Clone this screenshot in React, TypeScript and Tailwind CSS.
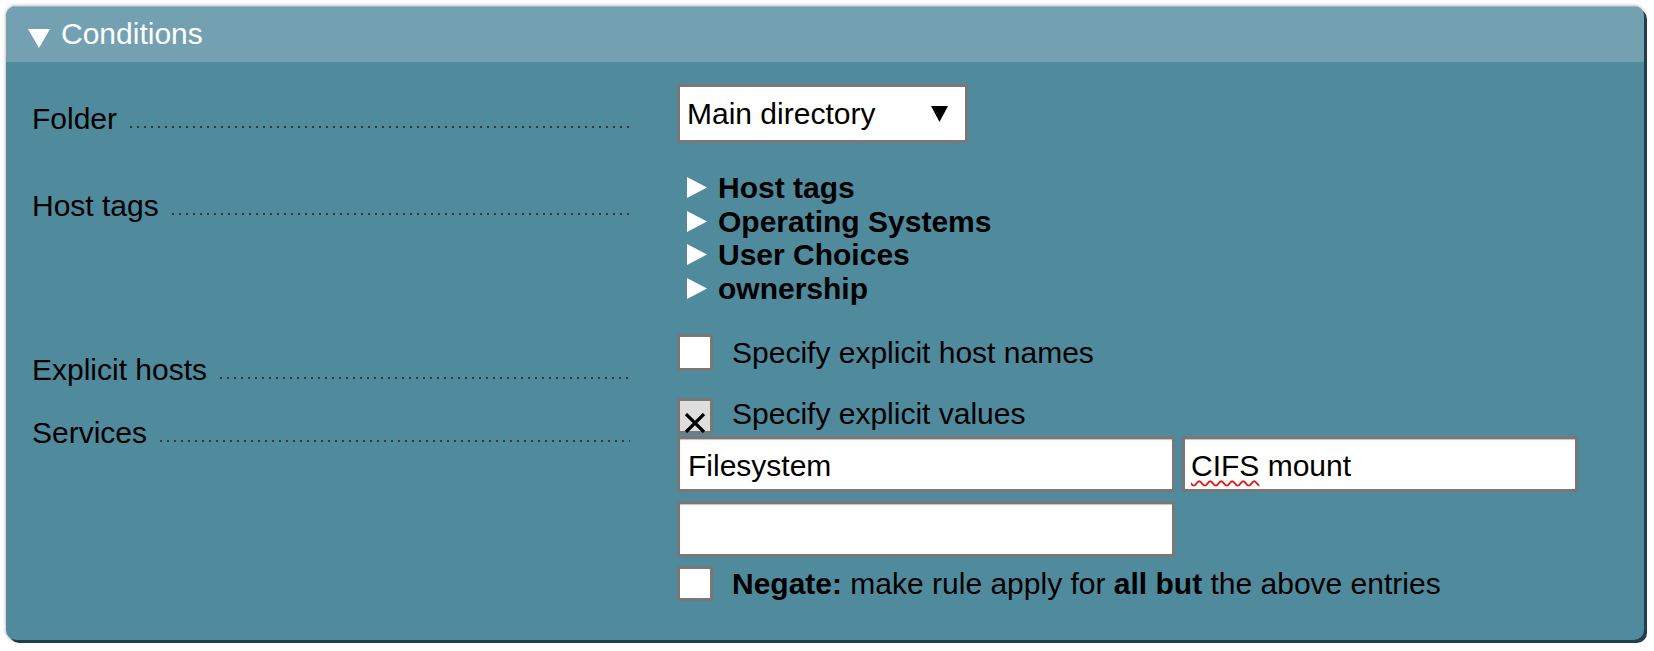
import React from "react";

function Dots() {
  return (
    <div className="mb-[8px] ml-[13px] h-[2px] flex-1 bg-[linear-gradient(to_right,#383838_2px,transparent_2px)] bg-[length:7px_2px] bg-repeat-x" />
  );
}

function Label({ text, className }: { text: string; className: string }) {
  return (
    <div className={"flex w-[598px] shrink-0 items-end " + className}>
      <span className="whitespace-nowrap leading-[34px]">{text}</span>
      <Dots />
    </div>
  );
}

function Checkbox({ checked, h }: { checked?: boolean; h: string }) {
  return (
    <div
      className={
        "box-border flex w-[36px] shrink-0 items-end justify-center overflow-visible border-3 border-solid border-[#787878] " +
        h +
        (checked ? " bg-[#dedede]" : " bg-white")
      }
    >
      {checked && (
        <svg width="22" height="20" viewBox="0 0 22 20" className="mb-[-2px]">
          <path d="M2 1 L20 19 M20 1 L2 19" stroke="#000" strokeWidth="3.2" fill="none" />
        </svg>
      )}
    </div>
  );
}

function RightTri() {
  return (
    <svg width="20" height="21" viewBox="0 0 20 21" className="ml-[10px] mr-[11px] shrink-0">
      <polygon points="0,0 20,10.5 0,21" fill="#fff" />
    </svg>
  );
}

export default function App() {
  const tags = ["Host tags", "Operating Systems", "User Choices", "ownership"];
  return (
    <div className="min-h-[651px] bg-white pl-[6px] pt-[6px] font-['Liberation_Sans',Arial,sans-serif] text-[30px] text-black">
      <div className="w-[1638px] overflow-hidden rounded-[10px] bg-[#508a9d] shadow-[3px_3px_0_0_#213e4b,0_0_3px_1px_rgba(0,0,0,0.22)]">
        {/* Header */}
        <div className="flex h-[56px] items-center bg-[#73a1b2] pl-[22px] text-white shadow-[inset_0_1px_0_#9cbecb]">
          <svg width="22" height="19" viewBox="0 0 22 19" className="mr-[11px] mt-[9px] shrink-0">
            <polygon points="0,0 22,0 11,19" fill="#fff" />
          </svg>
          <span className="leading-[34px]">Conditions</span>
        </div>

        {/* Body */}
        <div className="pb-[39px] pl-[26px] pt-[22px]">
          {/* Folder */}
          <div className="flex items-start">
            <Label text="Folder" className="pt-[18px]" />
            <div className="ml-[47px] flex h-[59px] w-[291px] items-center justify-between border-3 border-solid border-[#787878] bg-white pl-[7px] pr-[17px]">
              <span className="leading-[34px]">Main directory</span>
              <svg width="17" height="16" viewBox="0 0 17 16" className="mt-[1px]">
                <polygon points="0,0 17,0 8.5,16" fill="#000" />
              </svg>
            </div>
          </div>

          {/* Host tags */}
          <div className="mt-[28px] flex items-start">
            <Label text="Host tags" className="pt-[18px]" />
            <div className="ml-[47px] flex flex-col font-bold">
              {tags.map((t) => (
                <div key={t} className="flex h-[33.5px] items-center leading-[33.5px]">
                  <RightTri />
                  <span className="whitespace-nowrap">{t}</span>
                </div>
              ))}
            </div>
          </div>

          {/* Explicit hosts */}
          <div className="mt-[29px] flex items-start">
            <Label text="Explicit hosts" className="pt-[19px]" />
            <div className="ml-[47px] flex items-center">
              <Checkbox h="h-[37px]" />
              <span className="ml-[19px] whitespace-nowrap leading-[34px]">Specify explicit host names</span>
            </div>
          </div>

          {/* Services */}
          <div className="mt-[11px] flex items-start">
            <Label text="Services" className="pt-[18px]" />
            <div className="ml-[47px] flex flex-col">
              <div className="flex h-[36px] items-center">
                <Checkbox checked h="h-[36px]" />
                <span className="ml-[19px] mt-[-4px] whitespace-nowrap leading-[34px]">Specify explicit values</span>
              </div>
              <div className="mt-[2px] flex gap-[7px]">
                <div className="flex h-[56px] w-[498px] items-center border-3 border-solid border-[#787878] bg-white pl-[8px] shadow-[inset_0_1px_1px_rgba(0,0,0,0.25)]">
                  <span className="mt-[3px] leading-[34px]">Filesystem</span>
                </div>
                <div className="flex h-[56px] w-[396px] items-center border-3 border-solid border-[#787878] bg-white pl-[6px] shadow-[inset_0_1px_1px_rgba(0,0,0,0.25)]">
                  <span className="mt-[3px] whitespace-nowrap leading-[34px]">
                    <span className="underline decoration-[#e01b1b] decoration-wavy decoration-[1.5px] underline-offset-[4px]">CIFS</span> mount
                  </span>
                </div>
              </div>
              <div className="mt-[9px] h-[56px] w-[498px] border-3 border-solid border-[#787878] bg-white shadow-[inset_0_1px_1px_rgba(0,0,0,0.25)]" />
              <div className="mt-[9px] flex items-center">
                <Checkbox h="h-[35px]" />
                <span className="ml-[19px] whitespace-nowrap leading-[34px]">
                  <b>Negate:</b> make rule apply for <b>all but</b> the above entries
                </span>
              </div>
            </div>
          </div>
        </div>
      </div>
    </div>
  );
}
